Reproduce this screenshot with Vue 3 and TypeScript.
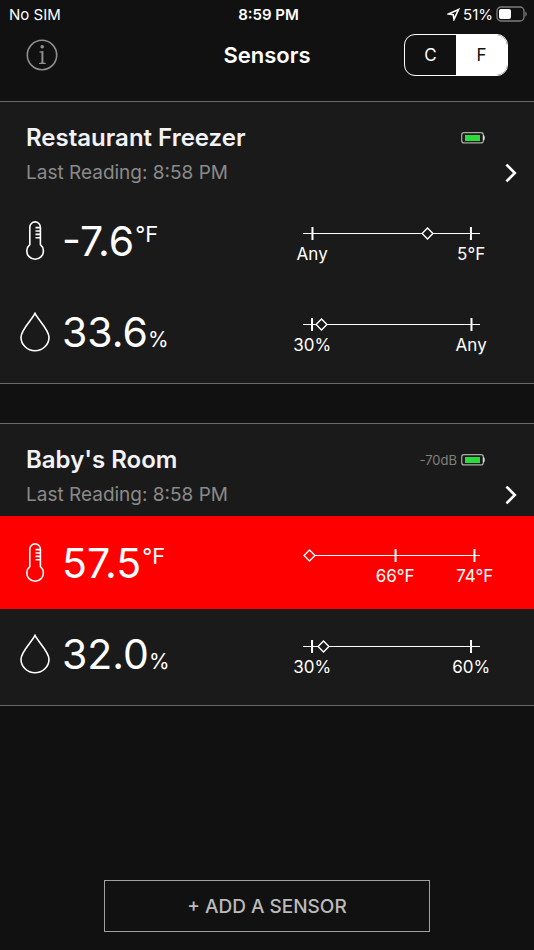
<script setup lang="ts">
import { computed, ref } from 'vue'

type Unit = 'C' | 'F'

interface Mark {
  at: number
  label: string
}

interface Reading {
  kind: 'temperature' | 'humidity'
  value: string
  unit: string
  alarm: boolean
  position: number
  marks: Mark[]
}

interface Sensor {
  name: string
  last: string
  signal?: string
  readings: Reading[]
}

const unit = ref<Unit>('F')
const units: Unit[] = ['C', 'F']

const toUnit = (f: number, digits: number): string =>
  (unit.value === 'F' ? f : ((f - 32) * 5) / 9).toFixed(digits)

const degrees = computed(() => `°${unit.value}`)

const sensors = computed<Sensor[]>(() => [
  {
    name: 'Restaurant Freezer',
    last: '8:58 PM',
    readings: [
      {
        kind: 'temperature',
        value: toUnit(-7.6, 1),
        unit: degrees.value,
        alarm: false,
        position: 70,
        marks: [
          { at: 5, label: 'Any' },
          { at: 95, label: toUnit(5, 0) + degrees.value },
        ],
      },
      {
        kind: 'humidity',
        value: '33.6',
        unit: '%',
        alarm: false,
        position: 10,
        marks: [
          { at: 5, label: '30%' },
          { at: 95, label: 'Any' },
        ],
      },
    ],
  },
  {
    name: "Baby's Room",
    last: '8:58 PM',
    signal: '-70dB',
    readings: [
      {
        kind: 'temperature',
        value: toUnit(57.5, 1),
        unit: degrees.value,
        alarm: true,
        position: 3,
        marks: [
          { at: 52, label: toUnit(66, 0) + degrees.value },
          { at: 97, label: toUnit(74, 0) + degrees.value },
        ],
      },
      {
        kind: 'humidity',
        value: '32.0',
        unit: '%',
        alarm: false,
        position: 11,
        marks: [
          { at: 5, label: '30%' },
          { at: 95, label: '60%' },
        ],
      },
    ],
  },
])
</script>

<template>
  <div class="screen">
    <div class="status">
      <span class="carrier">No SIM</span>
      <span class="clock">8:59 PM</span>
      <span class="power">
        <svg class="location" width="13" height="13" viewBox="0 0 13 13" aria-hidden="true">
          <path d="M11.6 1.4 L1.6 6 L6.2 6.8 L7 11.4 Z" />
        </svg>
        <span>51%</span>
        <svg width="32" height="16" viewBox="0 0 32 16" aria-hidden="true">
          <rect x="1" y="1" width="27" height="14" rx="4" fill="none" stroke="#7d7d7d" stroke-width="1.3" />
          <rect x="3" y="3" width="12" height="10" rx="2" fill="#fff" />
          <path d="M29.4 5.2 Q32 8 29.4 10.8 Z" fill="#8a8a8a" />
        </svg>
      </span>
    </div>

    <header class="nav">
      <button class="info" type="button" aria-label="About">
        <svg width="32" height="32" viewBox="0 0 32 32" aria-hidden="true">
          <circle cx="16" cy="16" r="14.7" fill="none" stroke="#8f8f8f" stroke-width="1.6" />
          <circle cx="16.2" cy="7.8" r="1.8" fill="#8f8f8f" />
          <path d="M13.4 12.6 L17.4 12 V23.4 L19.8 24 V25 H13 V24 L15.4 23.4 V13.8 L13.4 13.6 Z" fill="#8f8f8f" />
        </svg>
      </button>
      <h1>Sensors</h1>
      <div class="units" role="group" aria-label="Temperature unit">
        <button
          v-for="u in units"
          :key="u"
          type="button"
          :class="{ active: u === unit }"
          :aria-pressed="u === unit"
          @click="unit = u"
        >
          {{ u }}
        </button>
      </div>
    </header>

    <main class="list">
      <section v-for="sensor in sensors" :key="sensor.name" class="card">
        <div class="summary">
          <div class="line">
            <h2>{{ sensor.name }}</h2>
            <span class="badges">
              <span v-if="sensor.signal" class="signal">{{ sensor.signal }}</span>
              <svg width="24" height="12" viewBox="0 0 24 12" aria-hidden="true">
                <rect x="0.7" y="0.7" width="21.6" height="10.2" rx="2.2" fill="none" stroke="#a9a9a9" stroke-width="1.2" />
                <rect x="4" y="3" width="15" height="6" fill="#2bdc3a" />
                <path d="M22.3 3 Q23.7 3 23.7 5.8 Q23.7 8.6 22.3 8.6 Z" fill="#fff" />
              </svg>
            </span>
          </div>
          <div class="line">
            <p>Last Reading: {{ sensor.last }}</p>
            <button class="open" type="button" :aria-label="`Open ${sensor.name}`">
              <svg width="14" height="20" viewBox="0 0 14 20" aria-hidden="true">
                <path d="M2.4 1.6 L10.8 10 L2.4 18.4" fill="none" stroke="#fff" stroke-width="2.6" />
              </svg>
            </button>
          </div>
        </div>

        <div
          v-for="reading in sensor.readings"
          :key="reading.kind"
          class="reading"
          :class="[reading.kind, { alarm: reading.alarm }]"
        >
          <span class="icon">
            <svg v-if="reading.kind === 'temperature'" width="20" height="40" viewBox="0 0 20 40" aria-hidden="true">
              <path
                d="M4.8 23.6 V6.2 A5.3 5.3 0 0 1 15.4 6.2 V23.6 A8.3 8.3 0 1 1 4.8 23.6 Z M10.5 6.6 H15 M10.5 10 H15 M10.5 13.4 H15 M10.5 16.8 H15"
              />
            </svg>
            <svg v-else width="30" height="40" viewBox="0 0 30 40" aria-hidden="true">
              <path d="M15 1.4 C12.2 7.4 1 17.6 1 25.2 A14 13.5 0 0 0 29 25.2 C29 17.6 17.8 7.4 15 1.4 Z" />
            </svg>
          </span>
          <div class="value">
            <span class="number">{{ reading.value }}</span>
            <span class="unit">{{ reading.unit }}</span>
          </div>
          <div class="range">
            <div class="track">
              <span v-for="mark in reading.marks" :key="mark.at" class="mark" :style="{ left: `${mark.at}%` }">
                {{ mark.label }}
              </span>
              <svg
                class="pointer"
                :style="{ left: `${reading.position}%` }"
                width="13"
                height="13"
                viewBox="0 0 13 13"
                aria-hidden="true"
              >
                <path d="M6.5 1.1 L11.9 6.5 L6.5 11.9 L1.1 6.5 Z" />
              </svg>
            </div>
          </div>
        </div>
      </section>
    </main>

    <footer>
      <button class="add" type="button">+ ADD A SENSOR</button>
    </footer>
  </div>
</template>

<style>
body {
  margin: 0;
  background: #111;
}
</style>

<style scoped>
.screen {
  box-sizing: border-box;
  min-height: 100vh;
  display: flex;
  flex-direction: column;
  background: #111;
  color: #fff;
  font-family: Inter, "Liberation Sans", sans-serif;
}

h1,
h2,
p {
  margin: 0;
}

button {
  padding: 0;
  border: 0;
  background: none;
  color: inherit;
  font: inherit;
  cursor: pointer;
}

svg {
  display: block;
}

.status {
  display: grid;
  grid-template-columns: 1fr auto 1fr;
  align-items: center;
  height: 28px;
  padding: 0 6px 0 9px;
  font-size: 15px;
}

.clock {
  font-weight: 600;
}

.power {
  display: flex;
  justify-content: flex-end;
  align-items: center;
  gap: 3px;
}

.location path {
  fill: none;
  stroke: #fff;
  stroke-width: 1.6;
  stroke-linejoin: miter;
}

.nav {
  display: grid;
  grid-template-columns: 1fr auto 1fr;
  align-items: center;
  height: 54px;
  margin-bottom: 19px;
  padding: 0 26px;
}

.info {
  justify-self: start;
}

h1 {
  font-size: 22px;
  line-height: 28px;
  font-weight: 600;
}

.units {
  justify-self: end;
  display: grid;
  grid-template-columns: 1fr 1fr;
  box-sizing: border-box;
  width: 104px;
  height: 42px;
  border: 1px solid #fff;
  border-radius: 11px;
  overflow: hidden;
  font-size: 17px;
}

.units .active {
  background: #fff;
  color: #111;
}

.list {
  display: grid;
  gap: 39px;
}

.card {
  padding-bottom: 6px;
  border-top: 1px solid #6a6a6a;
  border-bottom: 1px solid #6a6a6a;
  background: #1a1a1a;
}

.summary {
  display: grid;
  align-content: start;
  gap: 3px;
  height: 92px;
  box-sizing: border-box;
  padding: 20px 16px 0 26px;
}

.line {
  display: flex;
  justify-content: space-between;
  align-items: center;
  height: 32px;
}

h2 {
  font-size: 24px;
  line-height: 32px;
  font-weight: 600;
  color: #f2f2f7;
}

.line p {
  font-size: 19px;
  line-height: 32px;
  color: #8a8a8a;
}

.badges {
  display: flex;
  align-items: center;
  gap: 4px;
  padding-right: 33px;
}

.signal {
  font-size: 13px;
  color: #808080;
}

.reading {
  display: flex;
  height: 90px;
  align-items: center;
  padding: 0 54px 0 15px;
}

.reading.temperature {
  height: 93px;
}

.alarm {
  background: #f00;
}

.icon {
  display: flex;
  justify-content: center;
  width: 40px;
}

.icon path {
  fill: none;
  stroke: #fff;
  stroke-width: 1.6;
}

.value {
  display: flex;
  flex: 1;
  align-items: baseline;
  padding-left: 7px;
  line-height: 48px;
}

.number {
  font-size: 41px;
}

.unit {
  font-size: 21px;
  line-height: 24px;
}

.temperature .value {
  align-items: flex-start;
  gap: 1px;
}

.temperature .unit {
  font-size: 22px;
  line-height: 34px;
}

.range {
  width: 38%;
  height: 56px;
}

.track {
  position: relative;
  height: 1px;
  margin-top: 20px;
  background: #fff;
}

.mark {
  position: absolute;
  top: -6px;
  display: flex;
  flex-direction: column;
  align-items: center;
  transform: translateX(-50%);
  font-size: 17px;
  line-height: 28px;
  white-space: nowrap;
}

.mark::before {
  content: "";
  width: 2px;
  height: 13px;
  background: #fff;
}

.pointer {
  position: absolute;
  top: -6px;
  margin-left: -6px;
}

.pointer path {
  fill: #1a1a1a;
  stroke: #fff;
  stroke-width: 1.4;
}

.alarm .pointer path {
  fill: #f00;
}

footer {
  display: flex;
  justify-content: center;
  margin-top: auto;
  padding: 18px 0;
}

.add {
  box-sizing: border-box;
  width: 61%;
  height: 52px;
  border: 1px solid #a0a0a0;
  color: #bbb;
  font-size: 19px;
  font-weight: 500;
}
</style>
